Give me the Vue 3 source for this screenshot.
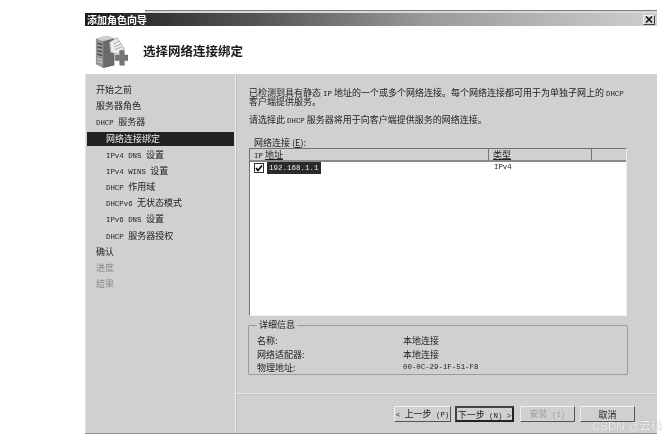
<script setup>
const seg = (s) => s.split(/([\x20-\x7e]+)/).filter(Boolean).map((t) => ({ t, lat: /^[\x20-\x7e]+$/.test(t) }))
const steps = [
  { t: '开始之前' },
  { t: '服务器角色' },
  { t: 'DHCP 服务器' },
  { t: '网络连接绑定', sub: true, on: true },
  { t: 'IPv4 DNS 设置', sub: true },
  { t: 'IPv4 WINS 设置', sub: true },
  { t: 'DHCP 作用域', sub: true },
  { t: 'DHCPv6 无状态模式', sub: true },
  { t: 'IPv6 DNS 设置', sub: true },
  { t: 'DHCP 服务器授权', sub: true },
  { t: '确认' },
  { t: '进度', off: true },
  { t: '结果', off: true },
]
const details = [
  ['名称:', '本地连接'],
  ['网络适配器:', '本地连接'],
  ['物理地址:', '00-0C-29-1F-51-F8'],
]
const buttons = [
  { t: '< 上一步 (P)', cls: 'prev' },
  { t: '下一步 (N) >', cls: 'next' },
  { t: '安装 (I)', cls: 'off' },
  { t: '取消', cls: 'cancel' },
]
</script>

<template>
  <div class="page">
    <div class="window">
      <div class="rim"></div>
      <div class="title">
        <span class="title-text">添加角色向导</span>
        <span class="close">
          <svg width="8" height="7" viewBox="0 0 8 7"><path d="M1 0.5 L7 6.5 M7 0.5 L1 6.5" stroke="#111" stroke-width="1.5" fill="none" /></svg>
        </span>
      </div>
      <div class="head">
        <svg class="logo" width="33" height="35" viewBox="0 0 36 38">
          <path d="M1 6 L13 3 L21 6 L21 35 L9 38 L1 34 Z" fill="#959595" />
          <path d="M1 6 L13 3 L21 6 L9 9 Z" fill="#cdcdcd" />
          <path d="M9 9 L21 6 L21 35 L9 38 Z" fill="#6a6a6a" />
          <path d="M2.5 11 L8 12.5 M2.5 15 L8 16.5 M2.5 19 L8 20.5 M2.5 23 L8 24.5" stroke="#444" stroke-width="1.4" />
          <path d="M2.5 28 L8 29.5 M2.5 31 L8 32.5" stroke="#ddd" stroke-width="1" />
          <path d="M16 10 L24 5 L32 17 L25 23 L17 21 Z" fill="#ececec" stroke="#999" stroke-width="0.8" />
          <path d="M20 12 L26 9 M21 15 L28 12 M22 18 L29 15" stroke="#999" stroke-width="0.9" />
          <path d="M22 24 H27 V19 H32 V24 H36 V30 H32 V35 H27 V30 H22 Z" fill="#757575" stroke="#606060" stroke-width="0.5" />
        </svg>
        <h1 class="head-text">选择网络连接绑定</h1>
      </div>
      <div class="body">
        <nav class="side">
          <div
            v-for="s in steps"
            :key="s.t"
            class="step"
            :class="{ sub: s.sub, on: s.on, off: s.off }"
          >
            <span v-for="(p, i) in seg(s.t)" :key="i" :class="{ lat: p.lat }">{{ p.t }}</span>
          </div>
        </nav>
        <main class="main">
          <div class="content">
            <p class="intro">
              <span class="line">已检测到具有静态 <span class="lat">IP</span> 地址的一个或多个网络连接。每个网络连接都可用于为单独子网上的 <span class="lat">DHCP</span></span>
              <span class="line">客户端提供服务。</span>
            </p>
            <p class="choose">请选择此 <span class="lat">DHCP</span> 服务器将用于向客户端提供服务的网络连接。</p>
            <div class="list-label">网络连接 (<u>E</u>):</div>
            <div class="list">
              <div class="cols">
                <span class="col c1"><span class="lat">IP</span> <u>地址</u></span>
                <span class="col c2"><u>类型</u></span>
                <span class="col c3"></span>
              </div>
              <div class="row">
                <span class="c1 cell">
                  <span class="check">
                    <svg width="8" height="8" viewBox="0 0 8 8"><path d="M1 4 L3 6.5 L7 1.5" stroke="#000" stroke-width="1.6" fill="none" /></svg>
                  </span>
                  <span class="ip">192.168.1.1</span>
                </span>
                <span class="c2 cell"><span class="lat">IPv4</span></span>
              </div>
            </div>
            <fieldset class="details">
              <legend>详细信息</legend>
              <div v-for="d in details" :key="d[0]" class="detail">
                <span class="d-key">{{ d[0] }}</span>
                <span v-for="(p, i) in seg(d[1])" :key="i" :class="{ lat: p.lat }">{{ p.t }}</span>
              </div>
            </fieldset>
          </div>
          <div class="foot">
            <button
              v-for="b in buttons"
              :key="b.t"
              class="btn"
              :class="b.cls"
            >
              <span v-for="(p, i) in seg(b.t)" :key="i" :class="{ lat: p.lat }">{{ p.t }}</span>
            </button>
          </div>
        </main>
      </div>
    </div>
    <div class="mark">CSDN @云码</div>
  </div>
</template>

<style>
html, body { background: #fff; }
</style>

<style scoped>
.page {
  position: relative;
  width: 670px;
  height: 443px;
  padding: 10px 0 0 85px;
  box-sizing: border-box;
  overflow: hidden;
  background: #fff;
  font-family: "Noto Sans CJK SC", "Liberation Sans", sans-serif;
  font-size: 9px;
  color: #222;
}
.window {
  width: 572px;
  height: 424px;
  display: flex;
  flex-direction: column;
  border-bottom: 1px solid #8c8c8c;
  box-sizing: border-box;
  filter: blur(0.35px);
}
.lat {
  font-family: "Liberation Mono", monospace;
  font-size: 7.4px;
}
.rim {
  height: 3px;
  flex: none;
  background:
    linear-gradient(90deg, #fff 60px, transparent 60px),
    linear-gradient(180deg, #7c7c7c 1px, #d8d8d8 1px);
}
.title {
  height: 13px;
  flex: none;
  display: flex;
  align-items: center;
  justify-content: space-between;
  padding: 0 2px;
  box-sizing: border-box;
  background: linear-gradient(90deg, #1c1c1c 0%, #555 30%, #9a9a9a 60%, #cfcfcf 100%);
}
.title-text {
  color: #fff;
  font-weight: 700;
  font-size: 10px;
  line-height: 12px;
}
.close {
  width: 12px;
  height: 10px;
  display: flex;
  align-items: center;
  justify-content: center;
  background: #d4d4d4;
  border: 1px solid;
  border-color: #f4f4f4 #444 #444 #f4f4f4;
  box-sizing: border-box;
}
.head {
  height: 48px;
  flex: none;
  display: flex;
  align-items: center;
  padding-left: 10px;
  background: #fff;
}
.logo { flex: none; }
.head-text {
  margin: 0 0 0 15px;
  font-size: 12.5px;
  font-weight: 700;
  color: #1a1a1a;
}
.body {
  flex: 1;
  display: flex;
  min-height: 0;
  background: #d0d0d0;
}
.side {
  width: 150px;
  flex: none;
  padding: 8px 1px 0 1px;
  box-sizing: border-box;
  border-left: 1px solid #e4e4e4;
}
.step {
  height: 16.2px;
  line-height: 16px;
  padding-left: 9px;
  white-space: nowrap;
}
.step.sub { padding-left: 19px; }
.step.on {
  background: #222;
  color: #eee;
  height: 14px;
  line-height: 14px;
  margin: 1px 0 1px;
  padding-left: 19px;
}
.step.off { color: #8a8a8a; }
.main {
  flex: 1;
  display: flex;
  flex-direction: column;
  min-width: 0;
  border-left: 1px solid #ececec;
  box-shadow: inset 1px 0 0 #bdbdbd;
}
.content {
  flex: 1;
  padding: 14px 30px 0 13px;
  min-height: 0;
}
.intro { margin: 0; }
.line {
  display: block;
  height: 9px;
  line-height: 9px;
  white-space: nowrap;
}
.choose {
  margin: 8px 0 0;
  line-height: 12px;
  white-space: nowrap;
}
.list-label {
  margin-top: 10px;
  height: 11px;
  line-height: 11px;
  padding-left: 5px;
  font-size: 9px;
}
.list {
  height: 168px;
  background: #fff;
  border: 1px solid;
  border-color: #707070 #f0f0f0 #f0f0f0 #707070;
  box-sizing: border-box;
}
.cols {
  height: 13px;
  display: flex;
  background: #d0d0d0;
  border-bottom: 2px solid #8a8a8a;
  box-sizing: border-box;
}
.col {
  line-height: 12px;
  padding-left: 4px;
  box-sizing: border-box;
  border-right: 1px solid #777;
}
.c1 { width: 239px; flex: none; }
.c2 { width: 103px; flex: none; }
.c3 { flex: 1; border-right: 0; }
.row {
  display: flex;
  height: 12px;
}
.cell {
  display: flex;
  align-items: center;
}
.c1.cell { padding-left: 4px; box-sizing: border-box; }
.c2.cell { padding-left: 5px; box-sizing: border-box; align-items: flex-start; line-height: 10px; }
.check {
  width: 10px;
  height: 10px;
  flex: none;
  display: flex;
  align-items: center;
  justify-content: center;
  border: 1px solid #333;
  background: #fff;
  box-sizing: border-box;
}
.ip {
  margin-left: 3px;
  padding: 0 2px;
  background: #2a2a2a;
  color: #eee;
  font-family: "Liberation Mono", monospace;
  font-size: 7.5px;
  line-height: 12px;
}
.details {
  margin: 4px 0 0 -1px;
  padding: 4px 0 0 8px;
  height: 55px;
  width: 380px;
  box-sizing: border-box;
  border: 1px solid #9c9c9c;
  border-radius: 1px;
}
.details legend {
  padding: 0 2px;
  margin-left: 0;
  font-size: 9px;
  line-height: 10px;
}
.detail {
  display: flex;
  height: 13.5px;
  line-height: 13px;
}
.d-key { width: 146px; flex: none; }
.foot {
  height: 40px;
  flex: none;
  display: flex;
  align-items: flex-start;
  padding: 12px 0 0 158px;
  box-sizing: border-box;
  border-top: 1px solid #ebebeb;
  box-shadow: inset 0 1px 0 #c0c0c0;
}
.btn {
  width: 55px;
  height: 16px;
  padding: 0;
  font: inherit;
  font-size: 9px;
  line-height: 13px;
  white-space: nowrap;
  color: #222;
  background: #d0d0d0;
  border: 1px solid;
  border-color: #f0f0f0 #555 #555 #f0f0f0;
  box-sizing: border-box;
}
.btn.prev { width: 57px; }
.btn.next {
  width: 59px;
  margin-left: 4px;
  border: 2px solid;
  border-color: #444 #222 #222 #444;
}
.btn.off { color: #9a9a9a; margin-left: 6px; }
.btn.cancel { margin-left: 5px; }
.mark {
  position: absolute;
  left: 592px;
  top: 420px;
  font-family: "Liberation Sans", "Noto Sans CJK SC", sans-serif;
  font-size: 11.5px;
  line-height: 13px;
  color: #fff;
  opacity: 0.75;
  text-shadow: 0 0 1px #777;
  white-space: nowrap;
}
</style>
